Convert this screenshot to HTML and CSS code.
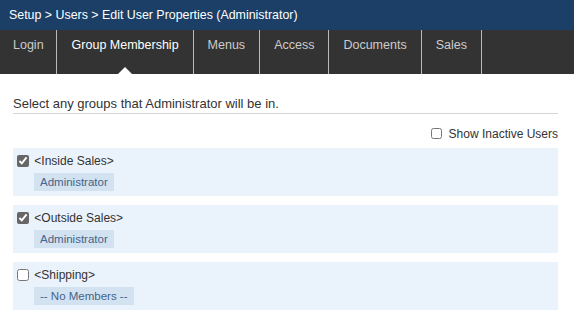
FILE: index.html
```html
<!DOCTYPE html>
<html lang="en">
<head>
    <meta charset="UTF-8">
    <title>Edit User Properties</title>
    <link rel="stylesheet" href="styles.css">
</head>
<body>
    <div class="crumbs">Setup &gt; Users &gt; Edit User Properties (Administrator)</div>
    <div class="tabs">
        <div class="tab first">Login</div>
        <div class="tab active">Group Membership</div>
        <div class="tab">Menus</div>
        <div class="tab">Access</div>
        <div class="tab">Documents</div>
        <div class="tab">Sales</div>
    </div>
    <div class="content">
        <div class="intro">Select any groups that Administrator will be in.</div>
        <div class="options">
            <label><input type="checkbox"> Show Inactive Users</label>
        </div>
        <div class="group">
            <label><input type="checkbox" checked> &lt;Inside Sales&gt;</label>
            <div class="members"><span class="member">Administrator</span></div>
        </div>
        <div class="group">
            <label><input type="checkbox" checked> &lt;Outside Sales&gt;</label>
            <div class="members"><span class="member">Administrator</span></div>
        </div>
        <div class="group">
            <label><input type="checkbox"> &lt;Shipping&gt;</label>
            <div class="members"><span class="member">-- No Members --</span></div>
        </div>
    </div>
</body>
</html>
```

FILE: styles.css
```css
body {
    margin: 0;
    font-family: "Liberation Sans", Arial, sans-serif;
    font-size: 12px;
    color: #333;
    background: #fff;
}
.crumbs {
    height: 30px;
    line-height: 30px;
    padding-left: 9px;
    background: #1b3f66;
    color: #fff;
    font-size: 12.4px;
}
.tabs {
    display: flex;
    height: 44px;
    background: #333;
}
.tab {
    position: relative;
    padding: 8px 14px 0 14px;
    border-right: 1px solid #bbb;
    color: #ccc;
    font-size: 12.5px;
}
.tab.first {
    padding-left: 13px;
    padding-right: 12px;
}
.tab.active {
    color: #fff;
    padding-left: 15px;
}
.tab.active::after {
    content: "";
    position: absolute;
    left: 50%;
    bottom: 0;
    margin-left: -7px;
    border-left: 7px solid transparent;
    border-right: 7px solid transparent;
    border-bottom: 7px solid #fff;
}
.content {
    padding: 22px 16px 0 13px;
}
.intro {
    font-size: 13px;
    line-height: 15px;
    color: #333;
    padding-bottom: 2px;
    border-bottom: 1px solid #d6d6d6;
}
.options {
    display: flex;
    justify-content: flex-end;
    padding: 13px 0 7px;
    color: #333;
}
.options input {
    margin: 0 3px 0 0;
    width: 11px;
    height: 11px;
    vertical-align: -1px;
}
.group {
    background: #eaf2fb;
    padding: 6px 4px 5px 4px;
    margin-bottom: 9px;
}
.group label {
    display: block;
    height: 15px;
}
.group input {
    margin: 0 2px 0 0;
    width: 12px;
    height: 12px;
    vertical-align: -2px;
    accent-color: #666;
}
.members {
    padding: 4px 0 0 17px;
}
.member {
    display: inline-block;
    height: 18px;
    line-height: 18px;
    font-size: 11.5px;
    background: #d3e2f0;
    color: #44648a;
    padding: 0 6px;
}
```
